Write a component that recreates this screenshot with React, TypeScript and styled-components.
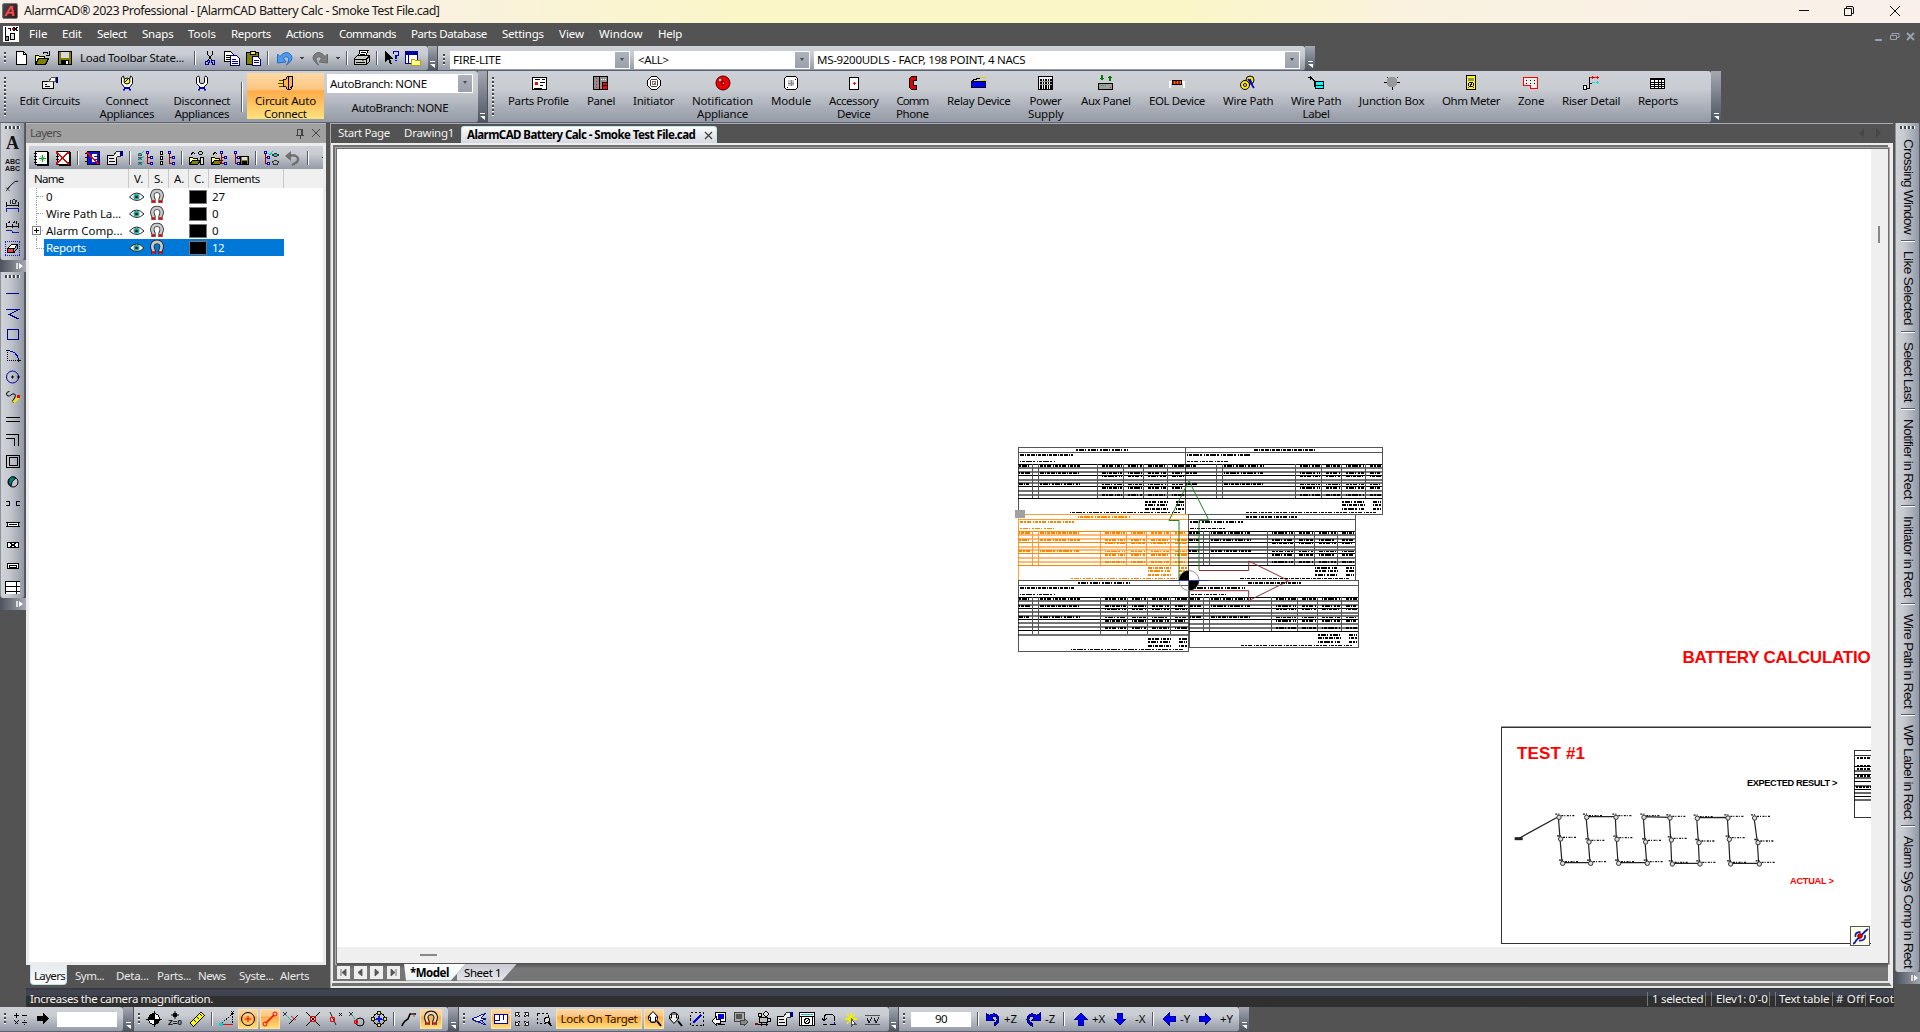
import React, { useLayoutEffect, useRef, useState } from 'react';
import styled, { createGlobalStyle, css } from 'styled-components';

const ui = `"Noto Sans", "Open Sans", sans-serif`;
const bar = 'linear-gradient(180deg,#cdd0d6 0%,#c9ccd1 35%,#a9aeb8 72%,#959ba6 100%)';
const barSide = 'linear-gradient(90deg,#cfd2d7 0%,#c6c9cf 35%,#a9aeb8 72%,#9298a4 100%)';
const capV = 'linear-gradient(180deg,#a3a8b2 0%,#7b818d 45%,#4d535e 100%)';
const hot = 'linear-gradient(180deg,#fbd9a5 0%,#fcc682 35%,#fdac49 40%,#fdc664 70%,#fee27e 100%)';

const Global = createGlobalStyle`
  html, body { margin: 0; padding: 0; background: #535353; }
  body { width: 1920px; height: 1032px; overflow: hidden; font: 11.5px/14px ${ui}; color: #0a0a0a; }
  * { box-sizing: border-box; }
`;

/* ---------- text that settles to a fixed advance ---------- */
const Fixed = styled.span<{ $w: number }>`
  display: block; flex: none; width: ${p => p.$w}px; white-space: nowrap;
`;
const Run = styled.span` display: inline-block; `;
function Fit({ w, children }: { w: number; children: string }) {
  const ref = useRef<HTMLSpanElement>(null);
  const [gap, setGap] = useState(0);
  useLayoutEffect(() => {
    if (ref.current) setGap((w - ref.current.offsetWidth) / children.length);
  }, []);
  return <Fixed $w={w}><Run ref={ref} style={{ letterSpacing: gap }}>{children}</Run></Fixed>;
}

/* ---------- icons, on a 16 x 16 pixel grid ---------- */
type Shape = { d: string; s?: string; f?: string; w?: number; dash?: string };
const L = (d: string, s = '#000', w = 1, dash?: string): Shape => ({ d, s, w, dash });
const F = (d: string, f = '#000', s?: string): Shape => ({ d, f, s, w: 1 });
const ring = (x: number, y: number, r: number) => `M${x - r} ${y}a${r} ${r} 0 1 0 ${2 * r} 0a${r} ${r} 0 1 0 ${-2 * r} 0z`;
const tree = (x: number, c = '#0000c0') => [L(`M${x} 2v11.500h3M${x} 7.500h3`, '#a00000'), F(`M${x + 2.500} 6.500h2v2h-2z`, '#fff', c), F(`M${x + 2.500} 12.500h2v2h-2z`, '#fff', c), F(`M${x - 1} 1.500h2v2h-2z`, '#fff', c)];
const book = [F('M2.500 1.500h12v13h-12z', '#fff', '#000'), L('M15.500 2v13.500h-12'), L('M1 3.500h3M1 6.500h3M1 9.500h3M1 12.500h3')];
const hand = (y = 0) => [F(`M.5 ${5.500 + y}h9v9h-9z`, '#e8e8e8', '#000'), L(`M2 ${8.500 + y}h5M2 ${11.500 + y}h6`), F(`M6.500 ${5.500 + y}l3-4h4v5h-3l-2 2`, '#eee', '#333'), F('M13 1h3v5h-3z', '#000080')];
const folder = [F('M.5 14.500v-7h3l1 1h4v2', '#ffff80', '#000'), F('M.5 14.500l3-4h8l-3 4z', '#808000', '#000')];
const shoe = 'M4.500 14v-3.500c-6-11.500 13-11.500 7 0v3.500';

const ICONS: Record<string, Shape[]> = {
  file: [F('M3.500 1.500h7l3 3v10h-10z', '#fff', '#000'), L('M10.500 1.500v3h3')],
  open: [F('M.5 14.500v-9h3l1 1h5v3', '#ffff80', '#000'), F('M.5 14.500l3-6h10l-3 6z', '#808000', '#000'), L('M8 3.500q3-3 5 0M14.500 1v4h-4')],
  save: [F('M1.500 1.500h13v13h-13z', '#808000', '#000'), F('M4 2h8v6h-8z', '#d8d8d8'), F('M4 10h8v5h-8z', '#000'), F('M9 11h2v3h-2z', '#fff'), L('M1.500 1v14')],
  cut: [L('M5.500 1v3l4 6M10.500 1v3l-4 6'), L('M3.500 11.500h2v-1h2v2h-1v2h-3zM9.500 10.500h3v4h-2v-2h-1z', '#0000a0', 1)],
  copy: [F('M.5 1.500h6l3 3v7h-9z', '#fff', '#000'), L('M2 5.500h4M2 7.500h5M2 9.500h5'), F('M6.500 5.500h6l3 3v7h-9z', '#fff', '#000080'), L('M8 9.500h4M8 11.500h6M8 13.500h6', '#0000a0')],
  paste: [F('M.5 2.500h12v12h-12z', '#808000', '#000'), F('M4 1h5v3h-5z', '#ffe060', '#000'), F('M6.500 6.500h5l3 3v6h-8z', '#fff', '#000080'), L('M8 10.500h5M8 12.500h5', '#0000a0')],
  undo: [F('M.5 13v-9l2.500 2.500q5-6 9.500-3 5 4 0 9l-3 2.500q4-6 1-8-2-1-4 1.500l2.500 3.500z', '#4c9bf0', '#2b6cc0')],
  redo: [F('M15.500 13v-9l-2.500 2.500q-5-6-9.500-3-5 4 0 9l3 2.500q-4-6-1-8 2-1 4 1.500l-2.500 3.500z', '#7d7d7d', '#686868')],
  down: [F('M5.500 6.500h5l-2.500 3z', '#444')],
  print: [F('M4.500 5.500l1.500-5h8l-2 5z', '#fff', '#000'), L('M7 2.500h5M6 4.500h5'), F('M.5 8.500l3-3h12v6l-3 3h-12z', '#c8c8c8', '#000'), L('M1 9.500h11v5M2 12.500h9M12 9.500l3-3'), F('M8 10h2v1h-2z', '#808000')],
  help: [F('M1 1v11l3-3 2 5h2l-2-5h3z'), L('M9.500 4v-2.500h5v4h-2.500v3M11 10.500h2', '#0000c0', 1.600)],
  frames: [F('M.5 1.500h12v12h-12z', '#fff', '#000080'), F('M1 2h12v3h-12z', '#0000a0'), L('M3.500 5v8', '#000080'), F('M6.500 9.500h3l1 1h5v5h-9z', '#ffff90', '#b8a000')],
  props: hand(0),
  edit: [F('M.5 6.500h11v7h-11z', '#eee', '#000'), L('M3 9.500h2M3 11.500h5'), F('M6.500 6.500l3-4h4v4z', '#fff', '#555'), F('M14 2h2v6h-2z', '#000080')],
  connect: [F('M5.500 12.500l-3-4v-6l2-1.500 1 4h5l1-4 2 1.500v6l-3 4z', '#fff', '#000'), F(ring(8, 6, 3), '#ffff00', '#000'), L('M6 7l3-3'), F('M5 12h6v2h-6zM4 14h2v1.500h-2zM10 14h2v1.500h-2z', '#0000c0')],
  disconnect: [F('M6.500 12.500l-4-4v-6l2-1.500 1 1.500v5l1.500 1h2l1.500-1v-5l1-1.500 2 1.500v6l-4 4z', '#fff', '#000'), F('M5 12h6v2h-6zM4 14h2v1.500h-2zM10 14h2v1.500h-2z', '#0000c0')],
  plug: [L('M1 5.500h5M0 8.500h6M1 11.500h5', '#604000', 1), L('M1 6.500h5M0 9.500h6', '#ffe000'), F('M5.500 4.500h2l2-3h5v10l-2 3h-3l-2-3h-2z', '#ffb050', '#000'), L('M10.500 2v12M12 13l2-2')],
  profile: [F('M1.500 2.500h14v12h-14z', '#fff', '#000'), L('M4 4.500h5M11 4.500h3M9 7.500h5M9 10.500h3M3 13h8'), F('M4 7h3v3h-3z', 'red')],
  panel: [F('M.5 1.500h14v13h-14z', '#909090', '#000'), L('M3.500 3v10', 'red', 1, '1 2'), L('M6.500 2v12'), L('M8 4.500h6', '#fff', 1, '1 1'), F('M10 8h4v6h-4z', 'red'), L('M9.500 7v8M9 7.500h6M10 10.500h4')],
  initiator: [F('M5.500 1.500h5l4 4v5l-4 4h-5l-4-4v-5z', '#fff', '#000'), L(ring(8, 8, 4), '#444'), L(ring(8, 8, 2), '#777'), F('M7.500 7.500h1v1h-1z', 'red')],
  bell: [F(ring(8, 8, 7), '#f00000', '#400'), L(ring(8, 8, 2), '#700'), F('M4 4h2v2h-2z', '#fff'), F('M8 8h1v1h-1z', '#fff')],
  module: [F('M3.500 1.500h9l2 2v9l-2 2h-9l-2-2v-9z', '#fff', '#000'), F('M5 5h6v6h-6z', '#c8c8c8'), L('M8 5v6M5 8h6', '#888'), F('M4 12h1v1h-1zM12 4h1v1h-1z')],
  accessory: [F('M3.500 2.500h9v12h-9z', '#fff', '#000'), L('M8 7v3M6.500 8.500h3', 'red')],
  phone: [F('M6.500 1.500h5v4h-3v5h3v4h-5l-2-2v-9z', '#e00000', '#000')],
  relay: [F('M.5 6.500h14v6h-14z', '#0000f0', '#000'), L('M1 5.500l6-2 7-1.500', '#000'), L('M9 3l6-1M11 5h4', '#e0d000')],
  power: [F('M.5 1.500h14v13h-14z', '#f0f0f0', '#000'), L('M2 4.500h12M2 7.500h12M2 10.500h12M2 13h12', '#000', 2, '1.500 1'), L('M2 6h12M2 9h12', '#999')],
  aux: [F('M3 0h2v3h1.500l-2.500 3-2.500-3h1.500zM11 6h2v-3h1.500l-2.500-3-2.500 3h1.500z', '#007a00'), F('M.5 8.500h14v6h-14z', '#a0a0a0', '#000'), L('M3 10.500h5', '#00c000', 1, '1 1'), F('M12 12h1v1h-1z', 'red')],
  eol: [L('M1 13v-6h3M15 13v-6h-3', '#fff', 1.500), F('M3.500 5.500h9v4h-9z', '#e00000', '#000'), L('M5.500 6v3M8.500 6v3M11 6v3', '#a0a000')],
  wire: [F(ring(10, 5, 4), '#ffe800', '#000'), L('M8 4l6 9M10 4l3 8', '#0000e0', 1.600), F(ring(5, 10, 4.500), '#ffe800', '#000'), F(ring(5, 10, 1.500), '#fff', '#000')],
  wirelabel: [L('M0 2.500h3l3 3v6h3', '#000', 1), L('M2 .5v4'), F('M7.500 6.500h8v7h-8z', '#00ffff', '#000'), L('M8 10h8')],
  junction: [F(ring(8, 7, 5.500), '#989898'), L('M0 7.500h3M13 7.500h3M8.500 12v3M3 2.500v-1M13 2.500v-1')],
  ohm: [F('M3.500 .5h9v14h-9z', '#ffff00', '#000'), F('M5 3h6v3h-6z', '#909060'), L(ring(8, 9.500, 2.500)), L('M6 12l4-5'), F('M5 12h1v1h-1zM10 12h1v1h-1z', 'red')],
  zone: [F('M.5 2.500h14v11h-7v-3h-7z', '#ececec', 'red'), L('M3 5.500h10M3 8.500h10', '#000', 1, '1 3')],
  riser: [F('M.5 10.500h3v4h-3z', '#fff', '#000'), L('M4 13.500h2.500v-11h6M6.500 8.500h2'), L('M7 2.500h9', 'red', 1, '3 1'), L('M9.500 1v3M14.500 1v3', 'red'), L('M9 7.500h7', '#00e0e0', 1, '3 1'), L('M14.500 6v3', '#00e0e0')],
  reports: [F('M.5 3.500h14v10h-14z', '#fff', '#000'), F('M0 3h15v2h-15z'), L('M1 7.500h14M1 9.500h14M1 11.500h14M4.500 4v9M8.500 4v9M11.500 4v9')],
  newlayer: [...book, L('M9.500 5v7M6 8.500h7', '#00a020'), L('M7 6l5 5M12 6l-5 5', '#60c070', .6)],
  dellayer: [...book, L('M1 2l13 12M14 2l-13 12', '#e00000', 1.600)],
  curlayer: [F('M2.500 1.500h12v13h-12z', '#1010d0', '#000'), L('M0 3.500h3M0 7.500h3M0 11.500h3'), F('M7 4h5v2h-3v1h3v2h-3v1h3v2h-5z', '#fff'), L('M1 2l13 12', 'red', 1.300)],
  checks: [L('M2.500 2.500v13', '#555', 4, '3 1.500'), L('M1 3l2 2 4-4M1 8l2 2 4-4M1 13l2 2 4-4', '#00c8c8'), ...tree(10.500)],
  boxes: [F('M1.500 1.500h2v3h-2zM1.500 6.500h2v3h-2zM1.500 11.500h2v3h-2z', '#fff', '#000'), ...tree(10.500)],
  openeye: [...folder, L('M2 4.500q2-3 4-1M9 3q3-3 5 0q-3 3-5 0'), F('M11.500 7.500h3v7h-3z', '#ddd', '#000')],
  opentree: [...folder, L('M2 4.500q2-3 4-1'), ...tree(10.500)],
  savetree: [...tree(2), F('M7.500 6.500h8v8h-8z', '#808000', '#000'), F('M9 7h5v3h-5z', '#ddd'), F('M9 11h5v4h-5z')],
  treeeye: [...tree(2), L('M5 3l2 2 3-4', '#00d0d0'), F('M9.500 5q3-3 6 0q-3 3-6 0z', '#20c0c0', '#333'), L('M9.500 12q3-3 6 0l-1 2h-4z', '#333')],
  grayundo: [L('M4 5.500h6q5 2.500 2 6.500l-5 3', '#707070', 2.500), F('M0 6l6-5v10z', '#707070')],
  sun: [F(ring(15, 7, 4), '#ffff00', '#000'), L('M8 1l3 3M7 7h3M8 12l3-2')],
  leader: [L('M2 12l7-7q2-2 5-1.500'), L('M1 10l4 4M1 14l4-4', '#222', .8)],
  dim: [L('M1.500 3v6M14.500 3v6M1 6.500h14'), L('M5.500 1v4M8 1h3v4h-3zM12.500 1v2', '#222'), L('M1.500 14v-3.500h13v3.500', '#1010a0')],
  dim2: [L('M1.500 3v6M7.500 4v4M14.500 3v6M1 6.500h14'), L('M3 3h2v-2M8 3h2v-2M12 1v3'), L('M1.500 11.500h6v2h7', '#1010a0')],
  eraser: [L('M.5 .5h15v15h-15z', '#1010d0', 1, '1 1'), F('M2.500 8.500l5-5h6l-4 5z', '#fff', '#000'), F('M2.500 8.500h7v4h-7z', '#f04040', '#000'), F('M9.500 8.500l4-5v4l-4 5z', '#a0a0a0', '#000')],
  line: [L('M1 8.500h13', '#000090')],
  poly: [L('M1 3.500h12.500l-9 5 9 4.500', '#000090')],
  rect: [L('M2.500 2.500h11v10h-11z', '#000090', 1)],
  arc: [L('M2.500 2v10.500h11', '#000', 1, '1 1'), L('M3 2.500q9 1 10.500 9', '#0000c0'), L('M1 2.500h3M12 12.500h4M13.500 11v3')],
  circle: [L(ring(7.500, 8, 6), '#0000b0'), L('M7.500 6.500v3M6 8h3M13.500 6.500v3M12 8h3')],
  spline: [L('M4.500 1.500q-3 0-3 2.500t3 2q3-3 5-2t0 4q-3 3-1 5'), L('M13.500 7.500l-5 5', '#e8e800', 2.500), F('M12 5h3v3h-3z', 'red')],
  wall: [L('M1 6.500h14M1 10.500h14')],
  corner: [L('M1 2.500h12.500v11.500M1 6.500h8.500v7.500')],
  squares: [L('M1.500 2.500h13v12h-13zM4.500 4.500h8v8h-8z')],
  yin: [F(ring(8, 8, 5), '#c4c4cc', '#000'), F('M11 4q-4-3-7 1-2 4 2 7 0-5 5-8z', '#008080', '#000')],
  gap: [L('M1 6.500h3.500v4h-3.500M15 6.500h-3.500v4h3.500')],
  window: [F('M2.500 6.500h11v4h-11z', '#fff', '#000'), L('M1 6.500h14M1 10.500h14M4 8.500h8')],
  cross: [F('M2.500 5.500h11v5h-11z', '#fff', '#000'), L('M5 6l6 4M11 6l-6 4')],
  plate: [F('M2.500 5.500h11v5h-11z', '#fff', '#000'), L('M4.500 7.500h7v1.500h-7z')],
  shelf: [F('M.5 2.500h14v12h-14z', '#fff'), L('M.5 2v13M0 2.500h15M0 7.500h15M0 12.500h15M11.500 2v13')],
  math: [L('M1 4.500h5M3.500 2v5M9 4.500h5M1.500 9.500l4 4M5.500 9.500l-4 4M9 11.500h5M11.500 8.500v1M11.500 13v1')],
  enter: [F('M2 5h6v-3l6 5.500-6 5.500v-3h-6z')],
  target: [F(ring(8, 8, 5.500), '#fff', '#000'), F('M8 8v-6a6 6 0 0 0-6 6zM8 8v6a6 6 0 0 0 6-6z'), L('M8 0v16M0 8h16')],
  ruler: [F('M1 12l11-11 3.500 3.500-11 11z', '#ffff00', '#000'), L('M5 9l2 2M8 6l2 2M11 3l2 2')],
  angle: [L('M1 13.500l12-10v10', '#000', 1, '1.500 1'), L('M3 13.500h11', 'red', 1.500), F('M0 11.500h4v3h-4z', '#00d0e0'), L('M12 0l3 3M15 0l-3 3')],
  center: [L(ring(8, 8, 6.500)), L('M8 5v6M5 8h6', 'red')],
  ends: [L('M4 12l8-8', 'red', 1.500), L(ring(3, 13, 2), 'red'), L(ring(13, 3, 2), 'red')],
  perp: [L('M0 1l4 4M0 5l4-4', '#333'), L('M6 13l9-9'), L('M3 4l6 6', '#00a0a0', 1, '2 1'), L('M8 5l5 4', 'red')],
  intersect: [L('M1 1l14 14M15 1l-14 14'), L('M5.500 5.500h5v5h-5z', 'red')],
  near: [L('M3 1l6 13', '#222'), L('M12 2l3 3M15 2l-3 3'), L('M3.500 6.500h4v4h-4z', 'red')],
  tangent: [L('M0 1l4 4M0 5l4-4', '#333'), L('M3 4l4 6', '#00a0a0', 1, '2 1'), L(ring(11, 11, 4)), L('M5.500 9.500h3v3h-3z', 'red')],
  quad: [L(ring(8, 8, 6)), L('M8 1v14M1 8h14', '#333'), L('M8 5v6M5 8h6', '#1010e0', 2), F('M.5 6.500h3v3h-3zM12.500 6.500h3v3h-3zM6.500 .5h3v3h-3zM6.500 12.500h3v3h-3z', '#e8d860', '#222')],
  sketch: [L('M1 15q1-3 3-5l3-2 2-5h6', '#000', 1.600), L('M10 3h3v3', '#a05050')],
  magnet: [L(shoe, '#222', 4.600), L(shoe, '#f4dcb0', 2.400), L('M3 12.500h3M10 12.500h3', '#e01818', 2.500)],
  layersic: [F('M0 8l14-6-5 5 5 1-9 3z', '#e8e8ff', '#1010a0'), L('M1 9l13 5-4-4', '#1010a0')],
  plan: [F('M1.500 3.500h13v9h-13z', '#fff', '#0000b0'), L('M6.500 4v5M10.500 4v5M1 9.500h6', '#0000b0')],
  extents: [F('M1.500 1.500h4l-1.500 1.500 2 2-1 1-2-2-1.500 1.500zM14.500 1.500h-4l1.500 1.500-2 2 1 1 2-2 1.500 1.500zM1.500 14.500h4l-1.500-1.500 2-2-1-1-2 2-1.500-1.500zM14.500 14.500h-4l1.500-1.500-2-2 1-1 2 2 1.500-1.500z', '#eee', '#222')],
  zoomwin: [L('M1.500 2.500h11v10h-11z', '#000', 1, '2 2'), F(ring(11, 9, 2.500), '#ddd', '#000'), L('M12.500 11l3 4', '#000', 1.600)],
  zoomin: [F(ring(7, 7, 4.500), '#fff', '#000'), L('M11 10l4 5', '#000', 2), F('M7 .5l5 5.500h-2.500v5h-5v-5h-2.500z', '#fff', '#000')],
  zoomout: [F(ring(7, 6, 4.500), '#fff', '#000'), L('M11 10l4 5', '#000', 2), F('M7 12.500l5-5.500h-2.500v-4h-5v4h-2.500z', '#eee', '#000')],
  selbox: [L('M1.500 1.500h13v13h-13z', '#000', 1, '2 2'), L('M4 12l8-8', '#0000f0', 1.800)],
  prevview: [F('M4.500 1.500h10v9h-10z', '#fff', '#000'), F('M7 3h6v5h-6z', '#0000e0'), F('M1 10l4-4v2h4v4h-4v2z', '#fff', '#000'), L('M7 13.500h7')],
  nextview: [F('M1.500 1.500h10v9h-10z', '#aaa', '#444'), F('M3 3h6v5h-6z', '#555'), F('M15 11l-4-4v2h-4v4h4v2z', '#888', '#444')],
  camera: [F('M4.500 6.500h8v5h-8z', '#bbb', '#000'), F(ring(5, 4, 2), '#ddd', '#000'), F(ring(11, 3, 2.300), '#ddd', '#000'), F('M12.500 7.500h3v3h-3z', '#ccc', '#000'), F('M0 12h3v2h-3z', '#a00000'), L('M3 13.500h10M6 12v3M11 12v3')],
  orbit: [F('M.5 1.500h15v13h-15z', '#fff', '#000'), L('M2 3.500h12', '#00c0c0'), L('M2.500 5v9M13.500 5v9M1 5.500h15'), L(ring(8, 10, 2.500)), L('M6 12l4-4')],
  rotview: [L('M3 10v-5l3-2h5l2 2v5'), L('M1 7l2 3 3-3M9 13.500h6M2 13.500h4'), L('M13 11v3', '#0000d0')],
  spark: [L('M2 8h12M4 3l8 10M12 3l-8 10M8 2v6', '#f0f000', 1.300), F('M8.500 8v7l2-2h2z', '#fff', '#555')],
  vv: [L('M0 4.500h15M0 13.500h15', '#333', .8), L('M2 7l2 5 3-6M9 7l2 5 3-6', '#222', 1)],
  rotl: [F('M1 2l3 2.500q5-3 8-.5 4 5 0 9l-3 2v-2.500q5-3 2-6.500-3-1-4.500 1l2 2h-7.500z', '#0000e8', '#000080')],
  rotr: [F('M15 2l-3 2.500q-5-3-8-.5-4 5 0 9l3 2v-2.500q-5-3-2-6.500 3-1 4.500 1l-2 2h7.500z', '#0000e8', '#000080')],
  up: [F('M8 2l6 6h-3.500v6h-5v-6h-3.500z', '#0000f8', '#000090')],
  dn: [F('M8 14l6-6h-3.500v-6h-5v6h-3.500z', '#0000f8', '#000090')],
  lt: [F('M2 8l6-6v3.500h6v5h-6v3.500z', '#0000f8', '#000090')],
  rt: [F('M14 8l-6-6v3.500h-6v5h6v3.500z', '#0000f8', '#000090')],
  eye: [F('M.5 8q7-8 14.500 0q-7 7-14.500 0z', '#fff', '#222'), F(ring(7.500, 7.700, 3), '#20a890'), F('M6.500 7h2v2h-2z', '#003')],
  snap: [L(shoe, '#222', 4.200), L(shoe, '#c8c8c8', 2.600), L('M3 12.500h3M10 12.500h3', '#e00000', 2.500)],
  mdi: [F('M0 0h16v16h-16z', '#fff'), L('M2.500 1v12M4.500 2h3v3M10.500 1l4 4M14.500 1l-4 4'), F('M7.500 7.500h4v6h-4z', '#ddd', '#000'), F('M2.500 10.500h3v4h-3z', '#888', '#000'), F('M9 2h2v2h-2z', '#e00000')],
  pin: [L('M4 10.500h8M5.500 10v-6h4.500v6M9.500 4v6M8 11v3', '#444')],
  x: [L('M4 4l8 8M12 4l-8 8', '#444')],
  ofs: [F('M0 0h16v16h-16z', '#fffde4'), L('M1 15.500q2 0 3-3l9-9 3-2.500', '#1020b0', 1.800), L('M3.500 9q-1-5 5-5M13 7q1 6-6 5.500', '#1020b0', 1.800), F(ring(8, 8, 2.300), '#f00000', '#800')],
};
const SMOOTH = new Set(['snap', 'magnet', 'eye', 'undo', 'redo', 'grayundo', 'spline', 'leader', 'center', 'ends', 'wire', 'bell', 'ofs', 'x', 'sketch', 'perp', 'near', 'tangent', 'intersect', 'yin', 'circle', 'zoomin', 'zoomout', 'connect', 'disconnect', 'extents']);

const Svg = styled.svg<{ $s?: number }>`
  display: block; flex: none; width: ${p => p.$s ?? 16}px; height: ${p => p.$s ?? 16}px; overflow: visible;
`;
const Icon = ({ n, s }: { n: string; s?: number }) => (
  <Svg $s={s} viewBox="0 0 16 16" shapeRendering={SMOOTH.has(n) ? 'auto' : 'crispEdges'}>
    {ICONS[n].map((p, i) => <path key={i} d={p.d} fill={p.f ?? 'none'} stroke={p.s ?? 'none'} strokeWidth={p.w} strokeDasharray={p.dash} />)}
  </Svg>
);
const Lettering = styled.span<{ $size: number; $lh: number; $serif?: boolean }>`
  font: bold ${p => p.$size}px/${p => p.$lh}px ${p => (p.$serif ? '"Liberation Serif", serif' : '"Liberation Sans", sans-serif')};
  text-align: center; color: #111;
`;

/* ---------- shared bar parts ---------- */
const Screen = styled.div` width: 1920px; height: 1032px; display: flex; flex-direction: column; background: #535353; overflow: hidden; `;
const Row = styled.div<{ $h?: number }>` display: flex; flex: none; ${p => p.$h && css`height: ${p.$h}px;`} `;
const Bar = styled.div<{ $w: number; $start?: number }>`
  flex: none; width: ${p => p.$w}px; display: flex; align-items: center; background: ${bar};
  border-bottom: 1px solid #5b6272; border-radius: 0 3px 3px 0; padding-left: ${p => p.$start ?? 3}px; overflow: hidden;
`;
const ComboBar = styled(Bar)` padding-top: 4px; `;
const Cap = styled.div<{ $w: number }>`
  flex: none; width: ${p => p.$w}px; margin-right: 1px; background: ${capV}; display: flex; flex-direction: column; align-items: flex-end; justify-content: flex-end;
  padding: 0 2px 3px 0; gap: 2px;
  &::before { content: ''; width: 5px; height: 1px; background: #fff; }
  &::after { content: ''; border-left: 5px solid transparent; border-right: 0 solid transparent; border-top: 4px solid #fff; }
`;
const Grip = styled.i<{ $n: number; $w?: number }>`
  flex: none; width: ${p => p.$w ?? 7}px; height: ${p => p.$n * 4}px;
  background: repeating-linear-gradient(180deg,#41454e 0 2px,#fff 2px 3px,#0000 3px 4px) 1px 0 / 2px 100% no-repeat;
`;
const GripH = styled.i`
  display: block; width: 15px; height: 3px; margin: 3px 0 4px 4px;
  background: repeating-linear-gradient(90deg,#41454e 0 2px,#fff 2px 3px,#0000 3px 4px);
`;
const Slot = styled.div<{ $w: number; $on?: boolean }>`
  flex: none; width: ${p => p.$w}px; height: 20px; display: flex; align-items: center; justify-content: center;
  ${p => p.$on && css`background: ${hot}; outline: 1px solid #fbe0a8; outline-offset: -1px;`}
`;
const Sep = styled.i<{ $w: number; $h?: number }>`
  flex: none; width: ${p => p.$w}px; height: ${p => p.$h ?? 14}px;
  background: linear-gradient(90deg,#555b69 0 1px,#fff 1px 2px) center / 2px 100% no-repeat;
`;
const Gap = styled.i<{ $w: number }>` flex: none; width: ${p => p.$w}px; `;
const Input = styled.div<{ $w: number }>`
  flex: none; width: ${p => p.$w}px; height: 15px; background: #fff; display: flex; align-items: center; justify-content: center;
`;
const Combo = styled.div<{ $w: number; $h: number; $pad: number }>`
  flex: none; width: ${p => p.$w}px; height: ${p => p.$h}px; background: #fff; display: flex; align-items: center; justify-content: space-between; padding: 1px 1px 1px ${p => p.$pad}px;
`;
const Drop = styled.i`
  width: 14px; height: 100%; background: linear-gradient(180deg,#aeb3bc,#9a9fab); display: flex; justify-content: center; padding-top: 6px;
  &::after { content: ''; height: 0; border: 2.5px solid transparent; border-top: 3px solid #4a4f5a; border-bottom: 0; }
`;
const Items = ({ list }: { list: (string | number)[][] }) => <>{list.map((it, i) =>
  it[0] === '|' ? <Sep key={i} $w={it[1] as number} /> :
    <Slot key={i} $w={it[1] as number} $on={it[2] === 1}><Icon n={it[0] as string} /></Slot>)}</>;

/* ---------- title and menus ---------- */
const Title = styled.div`
  flex: none; height: 23px; display: flex; align-items: center; background: linear-gradient(90deg,#f9f0ea 0,#f9f0e6 18%,#faf6c8 38%,#faf6c8 62%,#faf2e0 74%,#f9f0ea 100%);
  color: #1a1a1a; font-size: 12.5px; padding: 0 0 1px 2px;
`;
const Logo = styled.div`
  width: 16px; height: 16px; border-radius: 2px; background: linear-gradient(120deg,#4a4a50,#2c1518); border: 1px solid #777; margin: 0 6px 0 0;
  color: #ff4848; font: italic bold 15px/14px "Liberation Sans", sans-serif; text-align: center;
`;
const Push = styled.i` flex: 1; `;
const Menu = styled.div` flex: none; height: 23px; display: flex; align-items: center; gap: 15px; color: #fff; padding: 0 2px 2px 3px; `;
const MenuIcon = styled.div` margin-right: -5px; `;
const MdiButtons = styled.div` display: flex; padding-top: 6px; `;

/* ---------- large tool buttons ---------- */
const BigBar = styled(Bar)` align-items: stretch; `;
const Tool = styled.div<{ $w: number; $on?: boolean }>`
  flex: none; width: ${p => p.$w}px; display: flex; flex-direction: column; align-items: center; line-height: 13px; padding-top: 4px;
  ${p => p.$on && css`background: ${hot}; margin: 2px 3px 3px 0; padding-top: 2px;`}
  & > svg { margin-bottom: 3px; }
`;
const TallGrip = styled.div` display: flex; align-items: center; width: 7px; `;
const Branch = styled.div` display: flex; flex-direction: column; align-items: center; gap: 8px; padding-top: 3px; `;
const Big = ({ n, w, lines, on }: { n: string; w: number; lines: [string, number][]; on?: boolean }) => (
  <Tool $w={w} $on={on}><Icon n={n} />{lines.map(l => <Fit key={l[0]} w={l[1]}>{l[0]}</Fit>)}</Tool>
);
const Parts = styled.div` display: flex; gap: 18px; margin-left: 10px; `;
const PARTS: [string, number, [string, number][]][] = [
  ['profile', 61, [['Parts Profile', 61]]], ['panel', 28, [['Panel', 28]]], ['initiator', 41, [['Initiator', 41]]],
  ['bell', 61, [['Notification', 61], ['Appliance', 51]]], ['module', 40, [['Module', 40]]], ['accessory', 49, [['Accessory', 49], ['Device', 33]]],
  ['phone', 33, [['Comm', 32], ['Phone', 33]]], ['relay', 63, [['Relay Device', 63]]], ['power', 35, [['Power', 32], ['Supply', 35]]],
  ['aux', 50, [['Aux Panel', 50]]], ['eol', 56, [['EOL Device', 56]]], ['wire', 50, [['Wire Path', 50]]],
  ['wirelabel', 50, [['Wire Path', 50], ['Label', 27]]], ['junction', 65, [['Junction Box', 65]]], ['ohm', 58, [['Ohm Meter', 58]]],
  ['zone', 26, [['Zone', 26]]], ['riser', 58, [['Riser Detail', 58]]], ['reports', 40, [['Reports', 40]]],
];

/* ---------- middle area ---------- */
const Middle = styled.div` flex: none; height: 884px; display: flex; `;
const Side = styled.div` flex: none; width: 26px; display: flex; flex-direction: column; `;
const Dock = styled.div<{ $h: number }>`
  flex: none; height: ${p => p.$h}px; width: 25px; background: ${barSide}; border-right: 1px solid #555b6b; border-left: 1px solid #8d929d; border-radius: 0 0 3px 3px; overflow: hidden;
`;
const DockSlot = styled.div` height: 21px; display: flex; align-items: center; justify-content: center; `;
const SideCap = styled.div`
  flex: none; height: 12px; width: 26px; background: linear-gradient(90deg,#4d535e,#a3a8b2); display: flex; align-items: center; justify-content: flex-end; gap: 1px; padding-right: 3px;
  &::before { content: ''; width: 2px; height: 6px; background: #ddd; }
  &::after { content: ''; border: 3px solid transparent; border-left: 4px solid #fff; border-right: 0; }
`;
const Center = styled.div` flex: none; width: 1868px; display: flex; flex-direction: column; `;
const Panels = styled.div` flex: none; height: 865px; display: flex; `;
const Layers = styled.div` flex: none; width: 300px; display: flex; flex-direction: column; `;
const PanelHead = styled.div`
  height: 20px; background: #a0a0a0; color: #4b4b4b; border-top: 1px solid #b8b8b8; display: flex; align-items: center; justify-content: space-between; padding: 0 2px 2px 4px;
`;
const HeadIcons = styled.div` display: flex; `;
const PanelBody = styled.div` height: 822px; border: 3px solid #ececec; border-top-width: 3px; background: #fff; `;
const LayerBar = styled.div` height: 23px; background: ${bar}; display: flex; align-items: center; padding-left: 1px; overflow: hidden; width: 294px; `;
const GridRow = styled.div` display: grid; grid-template-columns: 100px 20px 20px 20px 20px 75px 1fr; `;
const HeadRow = styled(GridRow)` height: 19px; background: #f0f0f0; & > div { border-right: 1px solid #c9c9c9; padding: 3px 0 0 5px; } & > div:last-child { border: 0; } `;
const LayerRow = styled(GridRow)<{ $sel?: boolean }>`
  height: 17px; align-items: center; color: ${p => (p.$sel ? '#fff' : '#0a0a0a')};
  background: ${p => (p.$sel ? 'linear-gradient(#0078d7 0 0) 15px 0 / 240px 100% no-repeat' : 'none')};
`;
const Name = styled.div` display: flex; align-items: center; `;
const Count = styled.div` padding-left: 3px; `;
const Twig = styled.i<{ $last?: boolean }>`
  flex: none; position: relative; width: 17px; height: 17px;
  &::before { content: ''; position: absolute; left: 7px; top: 0; width: 7px; height: ${p => (p.$last ? 9 : 17)}px; border-left: 1px dotted #999; ${p => p.$last && 'border-bottom: 1px dotted #999;'} }
  ${p => !p.$last && css`&::after { content: ''; position: absolute; left: 8px; top: 8px; width: 6px; border-top: 1px dotted #999; }`}
`;
const Plus = styled.b`
  position: absolute; z-index: 1; left: 3px; top: 4px; width: 9px; height: 9px; border: 1px solid #848484;
  background: linear-gradient(#000 0 0) center/5px 1px no-repeat, linear-gradient(#000 0 0) center/1px 5px no-repeat, #fff;
`;
const Swatch = styled.i` display: block; width: 18px; height: 14px; background: #000; border: 1px solid #777; `;
const BottomTabs = styled.div` height: 23px; display: flex; color: #e8e8e8; padding: 0 0 0 4px; line-height: 22px; `;
const ActiveBottom = styled.div` width: 37px; height: 20px; padding: 0 0 0 3px; margin-right: 8px; color: #111; background: linear-gradient(#e4eaee,#fff); border-radius: 0 0 4px 4px; border: 1px solid #bfe3e6; border-top: 0; `;
const Doc = styled.div` flex: none; width: 1563px; margin-left: 4px; display: flex; flex-direction: column; border-left: 1px solid #a9a9a9; border-top: 1px solid #a8acb5; `;
const DocTabs = styled.div` height: 19px; display: flex; align-items: center; color: #f0f0f0; padding: 0 0 1px 7px; `;
const DocActive = styled.div`
  width: 256px; height: 17px; margin: 3px 0 0 7px; padding: 0 3px 0 5px; display: flex; align-items: center; justify-content: space-between; color: #000; font-weight: bold;
  background: linear-gradient(#fbfcfd,#d5d8df); border-radius: 3px 3px 0 0; border: 1px solid #c2e6ea; border-bottom: 0;
`;
const Nav = styled.i<{ $r?: boolean }>`
  margin-right: 12px; border: 5px solid transparent; ${p => (p.$r ? 'border-left: 5px solid #474747; border-right: 0;' : 'border-right: 5px solid #474747; border-left: 0;')}
`;
const Frame = styled.div` flex: 1; border: 2px solid #ececec; border-right-width: 5px; border-bottom: 7px double #e6e6e6; background: #707070; padding: 4px 0 0 4px; display: flex; flex-direction: column; `;
const View = styled.div` display: grid; grid-template-columns: 1534px 17px; grid-template-rows: 798px 16px; background: #efefef; box-shadow: 0 0 0 1px #6b6b6b, 0 0 0 2px #aaa; `;
const Canvas = styled.div` position: relative; overflow: hidden; background: #fff; `;
const Note = styled.span<{ $x: number; $y: number; $size: number; $c: string }>`
  position: absolute; left: ${p => p.$x - 337}px; top: ${p => p.$y - 149}px; color: ${p => p.$c}; white-space: nowrap;
  font: bold ${p => p.$size}px/1 "Liberation Sans", sans-serif;
`;
const Corner = styled.div` position: absolute; right: 1px; bottom: 1px; width: 20px; height: 20px; border: 1px solid #555; background: #fffde4; padding: 1px; `;
const VTrack = styled.div` padding: 77px 0 0 7px; &::after { content: ''; display: block; width: 2px; height: 17px; background: #888; } `;
const HTrack = styled.div` padding: 7px 0 0 83px; &::after { content: ''; display: block; width: 17px; height: 2px; background: #888; } `;
const Sheets = styled.div` flex: 1; display: flex; align-items: center; background: linear-gradient(#4f4f4f,#777 30%,#757575); color: #000; z-index: 1; `;
const NavBtn = styled.i` width: 13px; height: 13px; background: #eee; margin-right: 3.500px; display: flex; align-items: center; justify-content: center; `;
const Sheet = styled.div<{ $w: number; $on?: boolean }>`
  width: ${p => p.$w}px; height: 17px; margin-left: ${p => (p.$on ? 1 : -9)}px; padding-left: ${p => (p.$on ? 6 : 7)}px; line-height: 17px;
  background: ${p => (p.$on ? 'linear-gradient(#fff,#e8f2f4)' : 'linear-gradient(#c9ccd2,#e4e6ea)')}; font-weight: ${p => (p.$on ? 'bold' : 'normal')};
  clip-path: ${p => (p.$on ? 'polygon(0 0,100% 0,calc(100% - 15px) 100%,2px 100%)' : 'polygon(9px 0,100% 0,calc(100% - 15px) 100%,0 100%,0 60%)')};
`;
const RightSide = styled.div` flex: none; width: 26px; display: flex; flex-direction: column; padding-left: 1px; `;
const Vert = styled.div<{ $h: number }>`
  height: ${p => p.$h}px; width: 14px; margin-left: 5px; writing-mode: vertical-rl; font: 13.5px/14px "Liberation Sans", sans-serif; white-space: nowrap;
`;
const VertText = styled.span<{ $ls: number }>` letter-spacing: ${p => p.$ls}px; `;
const VSep = styled.i` display: block; width: 14px; height: 2px; margin: 6px 0 9px 5px; background: linear-gradient(#555b69 50%,#fff 50%); `;
const VSpace = styled.div` height: 6px; `;
function VFit({ h, children }: { h: number; children: string }) {
  const ref = useRef<HTMLSpanElement>(null);
  const [ls, setLs] = useState(0);
  useLayoutEffect(() => { if (ref.current) setLs((h - ref.current.getBoundingClientRect().height) / children.length); }, []);
  return <Vert $h={h}><VertText ref={ref} $ls={ls}>{children}</VertText></Vert>;
}

/* ---------- status ---------- */
const Status = styled.div`
  flex: none; height: 19px; display: flex; align-items: center; color: #f2f2f2; padding: 2px 0 0 4px;
  background: linear-gradient(#333640 0,#414653 3px,#3e424e 8px,#2f2f2f 8px,#303030 100%);
`;
const Cell = styled.div<{ $l: number; $r: number }>` border-left: 1px solid #777; height: 14px; padding: 0 0 0 ${p => p.$l}px; margin-right: ${p => p.$r}px; `;
const Lock = styled(Slot)` color: #2a1500; `;
const ZMark = styled.div` display: flex; flex-direction: column; align-items: center; font: bold 8px/8px "Liberation Sans", sans-serif; `;

/* ---------- the drawing ---------- */
const dashes = ['3 1 2 1 4 2 1 1', '2 1 5 1 1 2', '4 1 1 1 3 1', '1 1 3 1 6 1 2 2'];
const Sheetlet = ({ x, y, w, h, c = '#000', g = '#555', cols, gh = 34, r = 0 }: { x: number; y: number; w: number; h: number; c?: string; g?: string; cols: number[]; gh?: number; r?: number }) => {
  const top = y + 16.500;
  const n = Math.round(gh / 3.700);
  const mark = (a: number, b: number, yy: number, k: number, hh = 1) => <path key={`${a}${yy}`} d={`M${x + a} ${yy}H${x + b}`} stroke={c} strokeWidth={hh} strokeDasharray={dashes[(k + r) % 4]} />;
  return <g fill="none" shapeRendering="crispEdges">
    <path d={`M${x + .5} ${y + .5}h${w}v${h}h${-w}z`} stroke={g} strokeWidth={1} />
    <path d={`M${x} ${y + 5.500}h${w}`} stroke={g} />
    {Array.from({ length: n + 1 }, (_, i) => <path key={i} d={`M${x} ${Math.round(top + i * gh / n) + .5}h${w}`} stroke={c} strokeWidth={i % 3 === 0 ? 1 : 2} opacity={i % 3 === 0 ? 1 : .55} />)}
    {cols.map(k => <path key={k} d={`M${x + k + .5} ${top}v${gh}`} stroke={g} />)}
    {mark(w * .35, w * .66, y + 3, 1, 2)}
    {mark(2, w * .33, y + 7.500, 2, 2)}
    {mark(2, w * .22, y + 14.500, 3)}
    {[0, 2, 5].map(i => mark(cols[1] + 2, cols[1] + 42, top + 2 + i * 3.700, i, 2))}
    {[0, 2, 5].map(i => mark(1, 12, top + 2 + i * 3.700, i + 1, 2))}
    {[0, 2, 3, 5, 6, 8].map(i => cols.slice(2).map((k, j) => mark(k + 5, (cols[j + 3] ?? w) - 1, top + 2 + i * 3.700, i + j, i % 2 ? 1 : 2)))}
    {[12, 9, 5].map((d, i) => <g key={d}>{mark(w - 40, w - 17, y + h - d, i, 1.500)}{mark(w - 9, w - 1, y + h - d, i + 1, 1.500)}</g>)}
    {mark(w * .31, w * .97, y + h - 1.500, 3, 1.500)}
  </g>;
};
const px = (v: number) => 1480 + v / 3;
const py = (v: number) => 630 + v / 3;
const NODES = [
  [[235, 560], [240, 625], [246, 698]], [[318, 560], [325, 634], [330, 698]], [[406, 560], [409, 626], [414, 698]], [[490, 560], [495, 634], [500, 698]],
  [[568, 562], [572, 628], [575, 700]], [[650, 563], [655, 636], [658, 700]], [[742, 562], [746, 626], [750, 700]], [[822, 562], [832, 636], [836, 700]],
];
const route = NODES.flatMap((c, i) => (i % 2 ? [...c].reverse() : c)).map(([a, b]) => `${px(a)},${py(b)}`).join(' ');
const Art = styled.svg` position: absolute; left: 0; top: 0; width: 1534px; height: 798px; `;
const Drawing = () => (
  <Art viewBox="337 149 1534 798">
    <Sheetlet x={1018} y={447} w={167} h={67} cols={[14, 20, 79, 105, 125, 149]} />
    <Sheetlet x={1185} y={447} w={197} h={67} cols={[31, 37, 110, 136, 156, 180]} r={1} />
    <Sheetlet x={1018} y={514} w={170} h={66} c="#ff8400" g="#ff9c38" cols={[14, 20, 82, 108, 128, 152]} r={2} />
    <Sheetlet x={1188} y={514} w={167} h={66} cols={[15, 21, 79, 106, 126, 149]} r={3} />
    <Sheetlet x={1018} y={580} w={170} h={71} cols={[14, 20, 82, 109, 129, 152]} gh={37} />
    <Sheetlet x={1189} y={580} w={169} h={67} cols={[14, 20, 82, 108, 128, 152]} r={1} />
    <g fill="none" strokeWidth="1">
      <path d="M1189 481l-20 39.500h10V580M1189 481l20 39.500h-10V570" stroke="#208020" />
      <path d="M1199 570.500h49.700V561l40 19.700-40 20v-10H1189" stroke="#8c3038" />
      <circle cx="1189" cy="580.500" r="10" fill="none" stroke="#999" />
      <path d="M1189 580.500v-10a10 10 0 0 0-10 10zM1189 580.500v10a10 10 0 0 0 10-10z" fill="#000" />
      <path d="M1169 580.500h40" stroke="#3030a0" />
    </g>
    <path d="M1015 510h10v8h-10z" fill="#a0a0a0" />
    <g fill="none" shapeRendering="crispEdges">
      <path d="M1501.500 943.500V727.500H1880M1501 943.500H1880" stroke="#333" />
      <path d="M1501 726.500H1880" stroke="#999" />
      <path d="M1854.500 750.500h20M1854.500 750v67h20M1854 755.500h20" stroke="#333" />
      {[16, 20, 24, 27, 31, 35, 39, 42, 46, 49].map((d, i) => <path key={d} d={`M1854 ${750.500 + d}h20`} stroke="#000" strokeWidth={i % 2 ? 2 : 1} opacity={i % 2 ? .6 : 1} />)}
      <path d="M1857 758h14M1857 765.500h14M1857 769h14M1857 776h14M1856 787h15" stroke="#000" strokeWidth="2" strokeDasharray="2 1 3 1" />
    </g>
    <polyline points={`${px(115)},${py(626)} ${route}`} fill="none" stroke="#222" strokeWidth="1.2" />
    <path d={`M${px(104)} ${py(626)}h8`} stroke="#222" strokeWidth="3" />
    {NODES.flat().map(([a, b]) => <g key={`${a}-${b}`}>
      <circle cx={px(a + 2)} cy={py(b + 2)} r="2.2" fill="#ddd" stroke="#333" />
      <path d={`M${px(a) - 3} ${py(b) - 2.500}h5M${px(a) + 3} ${py(b) - 1}h13`} stroke="#111" strokeWidth="1.300" strokeDasharray="2 1 1 1.500" />
    </g>)}
  </Art>
);

const LAYERS: [string, number, string, number][] = [['0', 6, '27', 13], ['Wire Path La...', 75, '0', 6], ['Alarm Comp...', 77, '0', 6], ['Reports', 40, '12', 12]];
const VTOOLS: [string, number][] = [['Crossing Window', 95], ['Like Selected', 74], ['Select Last', 60], ['Notifier in Rect', 80], ['Initiator in Rect', 81], ['Wire Path in Rect', 94], ['WP Label in Rect', 94], ['Alarm Sys Comp in Rect', 132]];

export default function App() {
  return <Screen>
    <Global />
    <Title>
      <Logo>A</Logo><Fit w={415}>AlarmCAD® 2023 Professional - [AlarmCAD Battery Calc - Smoke Test File.cad]</Fit><Push />
      <Svg $s={10} viewBox="0 0 10 10"><path d="M0 4.500h10" stroke="#111" /></Svg><Gap $w={35} />
      <Svg $s={10} viewBox="0 0 10 10"><path d="M2.500 2V.5H8q1.500 0 1.500 1.500v5.500H8M.5 2.500h7v7h-7z" stroke="#111" fill="none" /></Svg><Gap $w={36} />
      <Svg $s={10} viewBox="0 0 10 10"><path d="M0 0l10 10M10 0L0 10" stroke="#111" /></Svg><Gap $w={20} />
    </Title>
    <Menu>
      <MenuIcon><Icon n="mdi" /></MenuIcon>
      {([['File', 18], ['Edit', 20], ['Select', 30], ['Snaps', 31], ['Tools', 28], ['Reports', 40], ['Actions', 38], ['Commands', 57], ['Parts Database', 76], ['Settings', 42], ['View', 25], ['Window', 44], ['Help', 24]] as [string, number][]).map(m => <Fit key={m[0]} w={m[1]}>{m[0]}</Fit>)}
      <Push />
      <MdiButtons>
        <Svg viewBox="0 0 16 16"><path d="M5 11h7" stroke="#98a0b0" strokeWidth="2" /></Svg>
        <Svg viewBox="0 0 16 16"><path d="M4.500 6.500h6v4h-6zM6 6V4.500h7v4h-2" stroke="#98a0b0" fill="none" /></Svg>
        <Svg viewBox="0 0 16 16"><path d="M5 4l7 7M12 4l-7 7" stroke="#98a0b0" strokeWidth="2" /></Svg>
      </MdiButtons>
    </Menu>
    <Row $h={25}>
      <Bar $w={428}>
        <Grip $n={3} />
        <Items list={[['file', 22], ['open', 22], ['save', 22]]} />
        <Gap $w={4} /><Fit w={104}>Load Toolbar State...</Fit><Gap $w={6} />
        <Items list={[['|', 10], ['cut', 20], ['copy', 24], ['paste', 20], ['|', 8], ['undo', 26], ['down', 8], ['redo', 28], ['down', 7], ['|', 12], ['print', 18], ['|', 12], ['help', 18], ['frames', 24]]} />
      </Bar>
      <Cap $w={9} />
      <ComboBar $w={867} $start={4}>
        <Grip $n={3} $w={8} />
        <Combo $w={180} $h={18} $pad={3}><Fit w={48}>FIRE-LITE</Fit><Drop /></Combo><Gap $w={4} />
        <Combo $w={176} $h={18} $pad={4}><Fit w={31}>{'<ALL>'}</Fit><Drop /></Combo><Gap $w={4} />
        <Combo $w={486} $h={18} $pad={3}><Fit w={208}>MS-9200UDLS - FACP, 198 POINT, 4 NACS</Fit><Drop /></Combo>
      </ComboBar>
      <Cap $w={10} />
    </Row>
    <Row $h={52}>
      <BigBar $w={478}>
        <TallGrip><Grip $n={10} /></TallGrip>
        <Big n="edit" w={80} lines={[['Edit Circuits', 61]]} />
        <Big n="connect" w={74} lines={[['Connect', 43], ['Appliances', 55]]} />
        <Big n="disconnect" w={76} lines={[['Disconnect', 57], ['Appliances', 55]]} />
        <TallGrip><Sep $w={4} $h={30} /></TallGrip>
        <Big n="plug" w={77} on lines={[['Circuit Auto', 61], ['Connect', 43]]} />
        <Branch><Combo $w={146} $h={19} $pad={3}><Fit w={97}>AutoBranch: NONE</Fit><Drop /></Combo><Fit w={97}>AutoBranch: NONE</Fit></Branch>
      </BigBar>
      <Cap $w={9} />
      <BigBar $w={1223} $start={3}>
        <TallGrip><Grip $n={10} /></TallGrip>
        <Parts>{PARTS.map((p, i) => <Big key={i} n={p[0]} w={p[1]} lines={p[2]} />)}</Parts>
      </BigBar>
      <Cap $w={10} />
    </Row>
    <Middle>
      <Side>
        <Dock $h={137}>
          <GripH />
          <DockSlot><Lettering $size={18} $lh={19} $serif>A</Lettering></DockSlot>
          <DockSlot><Lettering $size={7} $lh={7}>ABC<br />ABC</Lettering></DockSlot>
          {['leader', 'dim', 'dim2', 'eraser'].map(n => <DockSlot key={n}><Icon n={n} s={15} /></DockSlot>)}
        </Dock>
        <SideCap />
        <Dock $h={326}>
          <GripH />
          {['line', 'poly', 'rect', 'arc', 'circle', 'spline', 'wall', 'corner', 'squares', 'yin', 'gap', 'window', 'cross', 'plate', 'shelf'].map(n => <DockSlot key={n}><Icon n={n} /></DockSlot>)}
        </Dock>
        <SideCap />
      </Side>
      <Center>
        <Panels>
          <Layers>
            <PanelHead><Fit w={31}>Layers</Fit><HeadIcons><Icon n="pin" /><Icon n="x" /></HeadIcons></PanelHead>
            <PanelBody>
              <LayerBar><Items list={[['newlayer', 22], ['dellayer', 22], ['|', 8], ['curlayer', 22], ['props', 22], ['|', 8], ['checks', 22], ['boxes', 22], ['|', 8], ['openeye', 22], ['opentree', 22], ['savetree', 22], ['|', 8], ['treeeye', 22], ['grayundo', 22], ['|', 8], ['sun', 22]]} /></LayerBar>
              <HeadRow><div><Fit w={29}>Name</Fit></div><div>V.</div><div>S.</div><div>A.</div><div>C.</div><div><Fit w={46}>Elements</Fit></div><div /></HeadRow>
              {LAYERS.map((l, i) => <LayerRow key={l[0]} $sel={i === 3}>
                <Name><Twig $last={i === 3}>{i === 2 && <Plus />}</Twig><Fit w={l[1]}>{l[0]}</Fit></Name>
                <Icon n="eye" /><Icon n="snap" /><i /><Swatch /><Count><Fit w={l[3]}>{l[2]}</Fit></Count>
              </LayerRow>)}
            </PanelBody>
            <BottomTabs>
              <ActiveBottom><Fit w={31}>Layers</Fit></ActiveBottom>
              <Fit w={29}>Sym...</Fit><Gap $w={12} /><Fit w={33}>Deta...</Fit><Gap $w={8} /><Fit w={34}>Parts...</Fit><Gap $w={7} /><Fit w={28}>News</Fit><Gap $w={13} /><Fit w={35}>Syste...</Fit><Gap $w={6} /><Fit w={29}>Alerts</Fit>
            </BottomTabs>
          </Layers>
          <Doc>
            <DocTabs>
              <Fit w={52}>Start Page</Fit><Gap $w={14} /><Fit w={50}>Drawing1</Fit>
              <DocActive><Fit w={228}>AlarmCAD Battery Calc - Smoke Test File.cad</Fit><Svg $s={9} viewBox="0 0 9 9"><path d="M1 1l7 7M8 1l-7 7" stroke="#444" strokeWidth="1.400" /></Svg></DocActive>
              <Push /><Nav /><Nav $r />
            </DocTabs>
            <Frame>
              <View>
                <Canvas>
                  <Drawing />
                  <Note $x={1682.500} $y={648.500} $size={17} $c="red"><Fit w={188}>BATTERY CALCULATIO</Fit></Note>
                  <Note $x={1517} $y={745} $size={17} $c="red"><Fit w={68}>TEST #1</Fit></Note>
                  <Note $x={1747} $y={779} $size={9.200} $c="#000"><Fit w={90}>{'EXPECTED RESULT >'}</Fit></Note>
                  <Note $x={1790} $y={877} $size={9.200} $c="red"><Fit w={44}>{'ACTUAL >'}</Fit></Note>
                  <Corner><Icon n="ofs" /></Corner>
                </Canvas>
                <VTrack /><HTrack /><i />
              </View>
              <Sheets>
                {['M4 3v7M9 3v7l-4-3.500z', 'M8 3v7l-4-3.500z', 'M5 3v7l4-3.500z', 'M9 3v7M4 3v7l4-3.500z'].map(d => <NavBtn key={d}><Svg $s={13} viewBox="0 0 13 13"><path d={d} fill="#555" stroke="#555" strokeWidth=".8" /></Svg></NavBtn>)}
                <Sheet $w={62} $on><Fit w={39}>*Model</Fit></Sheet>
                <Sheet $w={60}><Fit w={37}>Sheet 1</Fit></Sheet>
              </Sheets>
            </Frame>
          </Doc>
        </Panels>
        <Status>
          <Fit w={183}>Increases the camera magnification.</Fit><Push />
          <Cell $l={4} $r={2}><Fit w={51}>1 selected</Fit></Cell><Cell $l={0} $r={5}><i /></Cell>
          <Cell $l={4} $r={1}><Fit w={52}>{"Elev1: 0'-0"}</Fit></Cell><Cell $l={0} $r={5}><i /></Cell>
          <Cell $l={3} $r={3}><Fit w={50}>Text table</Fit></Cell>
          <Cell $l={3} $r={1}><Fit w={28}># Off</Fit></Cell>
          <Cell $l={3} $r={0}><Fit w={25}>Foot</Fit></Cell>
        </Status>
      </Center>
      <RightSide>
        <Dock $h={849}>
          <GripH />
          <VSpace />
          {VTOOLS.map((v, i) => <React.Fragment key={v[0]}><VFit h={v[1]}>{v[0]}</VFit>{i < 7 && <VSep />}</React.Fragment>)}
        </Dock>
        <SideCap />
      </RightSide>
    </Middle>
    <Row $h={25}>
      <Bar $w={123}><Grip $n={3} /><Items list={[['math', 22], ['enter', 22]]} /><Gap $w={3} /><Input $w={60} /></Bar><Cap $w={10} />
      <Bar $w={314}><Grip $n={3} /><Items list={[['target', 20]]} /><Slot $w={22}><ZMark><Svg $s={8} viewBox="0 0 8 8"><path d="M4 0v8M0 4h8M2.500 2.500h3v3h-3z" stroke="#000" /></Svg><span>Z=0</span></ZMark></Slot>
        <Items list={[['ruler', 22], ['|', 8], ['angle', 22], ['center', 20, 1]]} /><Gap $w={2} /><Items list={[['ends', 20, 1], ['perp', 22], ['intersect', 22], ['near', 22], ['tangent', 22], ['quad', 22], ['|', 8], ['sketch', 22], ['magnet', 22, 1]]} /></Bar><Cap $w={10} />
      <Bar $w={430}><Grip $n={3} /><Items list={[['layersic', 22], ['plan', 20, 1], ['extents', 22], ['zoomwin', 22]]} />
        <Gap $w={1} /><Lock $w={86} $on><Fit w={77}>Lock On Target</Fit></Lock><Gap $w={2} />
        <Items list={[['zoomin', 20, 1], ['zoomout', 22], ['selbox', 22], ['prevview', 22], ['nextview', 22], ['camera', 22], ['props', 22], ['orbit', 22], ['rotview', 22], ['spark', 22], ['vv', 22]]} /></Bar><Cap $w={9} />
      <Bar $w={340}><Grip $n={3} /><Gap $w={2} /><Input $w={60}><Fit w={12}>90</Fit></Input>
        <Items list={[['|', 14], ['rotl', 16]]} /><Gap $w={3} /><Fit w={13}>+Z</Fit><Gap $w={4} /><Items list={[['rotr', 24]]} /><Fit w={10}>-Z</Fit>
        <Items list={[['|', 18], ['up', 16]]} /><Gap $w={3} /><Fit w={13}>+X</Fit><Items list={[['dn', 30]]} /><Fit w={10}>-X</Fit>
        <Items list={[['|', 16], ['lt', 16]]} /><Gap $w={3} /><Fit w={10}>-Y</Fit><Items list={[['rt', 30]]} /><Fit w={13}>+Y</Fit></Bar><Cap $w={10} />
    </Row>
  </Screen>;
}
